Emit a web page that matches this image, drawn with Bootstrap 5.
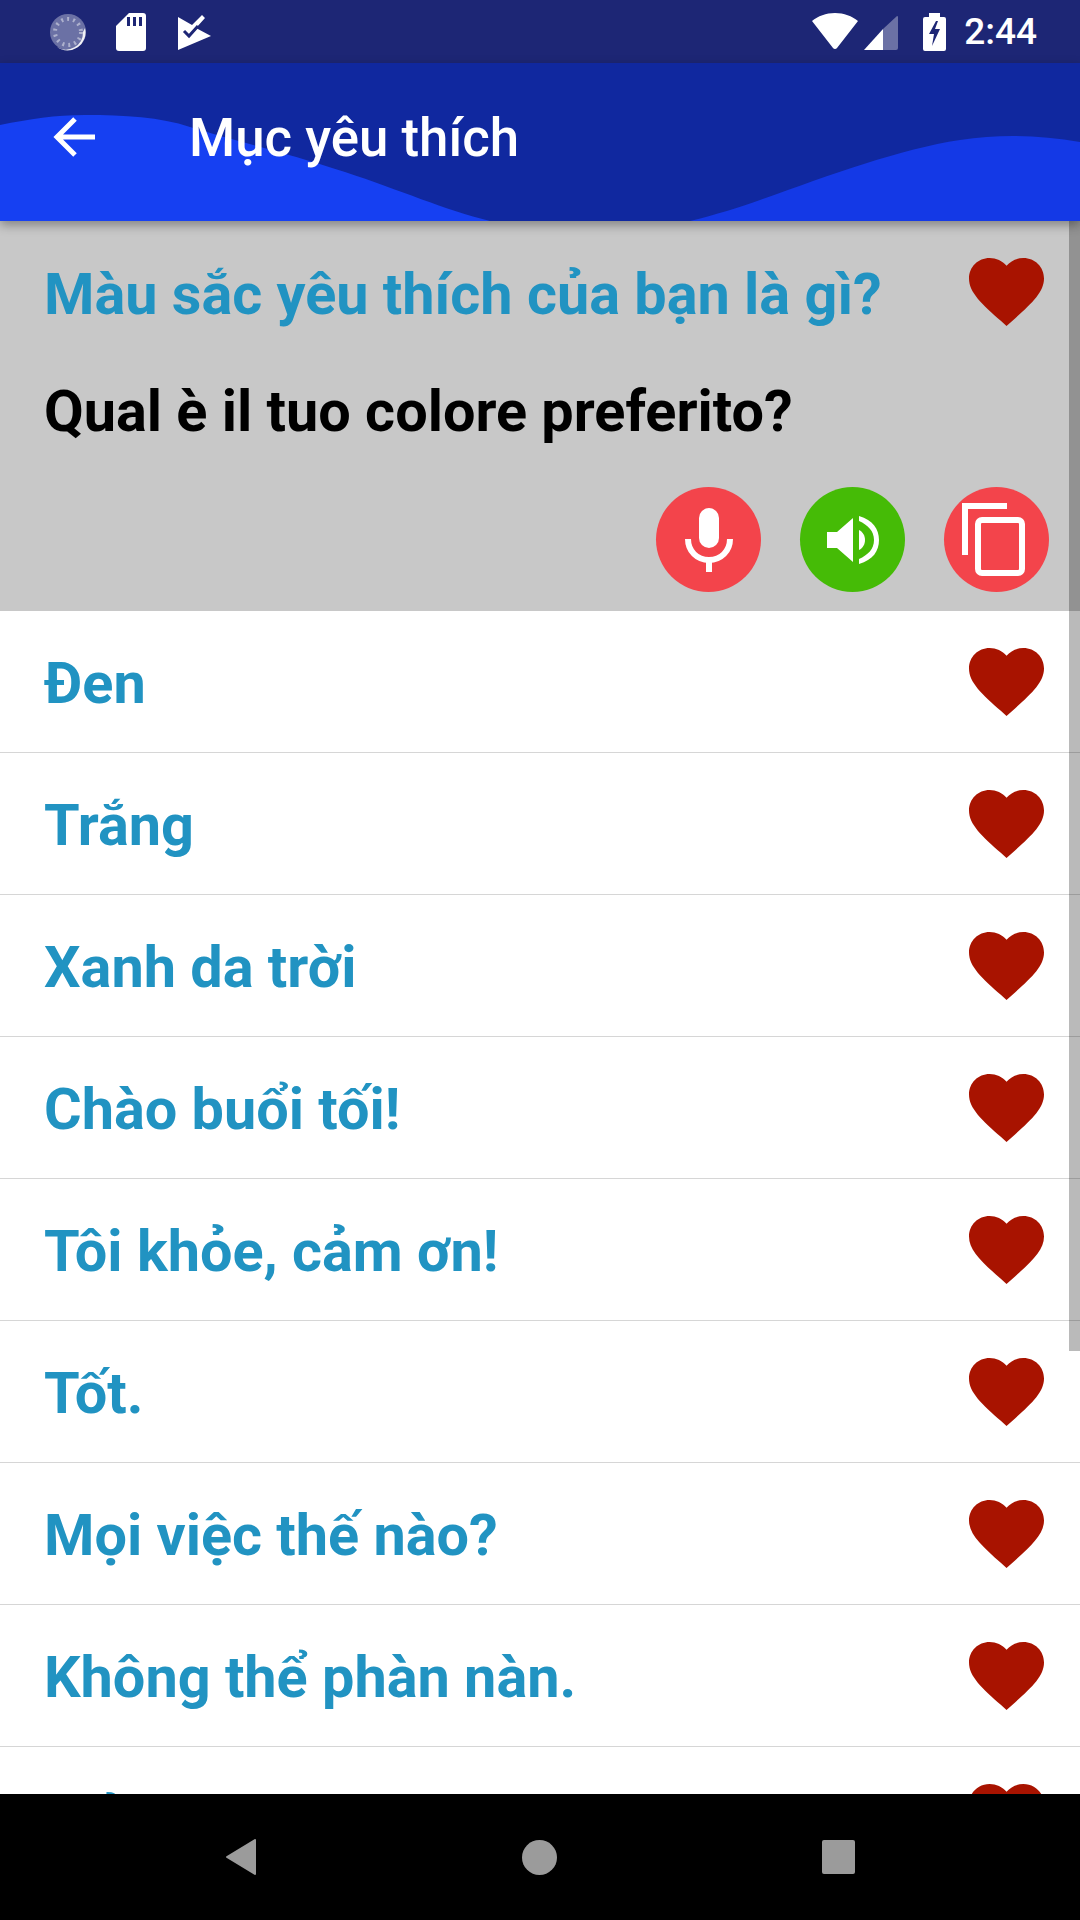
<!DOCTYPE html>
<html lang="vi"><head><meta charset="utf-8">
<link href="https://cdn.jsdelivr.net/npm/bootstrap@5.3.0/dist/css/bootstrap.min.css" rel="stylesheet">
<style>
html,body{margin:0;height:1920px;width:1080px;overflow:hidden}
body{font-family:Roboto,"Noto Sans",sans-serif;background:#fff}
.shell{height:1920px;width:1080px;position:relative}
.sbar{height:63px;background:#1d2675;padding-left:49px;padding-right:43px;color:#fff}
.clock{font-size:37px;font-weight:500;line-height:1;margin-left:18px}
.abar{height:158px;background:#10289f;position:relative;box-shadow:0 4px 10px rgba(0,0,0,.35);z-index:2;color:#fff}
.wave{position:absolute;inset:0;width:100%;height:100%}
.abar-in{position:relative;height:148px;padding-left:53px}
.atitle{font-size:52.800px;font-weight:500;margin-left:94px;line-height:1;padding-top:2px}
.fav{background:#c8c8c8;height:390px;padding:0 36px 0 44px}
.q,.a,.lrow span{font-size:57.600px;font-weight:700;line-height:1;margin-top:6px}
.lrow span{margin-top:5px}
.q,.lrow span{color:#2193c2}
.a{color:#000}
.h-ico{width:75px;height:68px;flex:none}
.qline{height:142px}
.aline{height:124px;padding-bottom:32px}
.rbtn{width:105px;height:105px;border-radius:50%;flex:none}
.rred{background:#f3444b}.rgreen{background:#45bb06}
.btns{gap:39px;margin-right:-5px}
.cp{margin-right:8px}
.lst{height:1183px;overflow:hidden}
.lrow{height:142px;padding:0 36px 0 44px;border-bottom:1px solid #d6d6d6}
.nbar{height:126px;background:#000}
.sb{position:absolute;right:0;top:221px;width:11px;height:1130px;background:rgba(0,0,0,.27);z-index:3}
</style></head><body>
<div class="shell d-flex flex-column">
<div class="sbar d-flex align-items-center justify-content-between">
 <div class="d-flex align-items-center" style="gap:28px">
  <svg width="38" height="38" viewBox="0 0 38 38"><circle cx="19" cy="19" r="18" fill="#fff" opacity=".35"/><path d="M36 15a18 18 0 0 1-28 19a17 17 0 0 0 26-15z" fill="#fff" opacity=".9"/><circle cx="19" cy="19" r="13" fill="none" stroke="#fff" stroke-opacity=".45" stroke-width="4" stroke-dasharray="2 4"/></svg>
  <svg width="32" height="38" viewBox="0 0 32 38"><path d="M14 0h14a3 3 0 0 1 3 3v32a3 3 0 0 1-3 3H4a3 3 0 0 1-3-3V13z" fill="#fff"/><path d="M12 4h3v9h-3zM18 4h3v9h-3zM24 4h3v9h-3z" fill="#1d2675"/></svg>
  <svg width="34" height="36" viewBox="0 0 34 36" style="margin-left:2px"><path d="M1 3l14 8L25 1l3 3-9 10 15 8L1 36z" fill="#fff"/><path d="M7 17l5 5 9-10" fill="none" stroke="#1d2675" stroke-width="3"/></svg>
 </div>
 <div class="d-flex align-items-center">
  <svg width="46" height="37" viewBox="0 0 46 37"><path d="M0 8C6 3 14 0 23 0s17 3 23 8L25 35a2.500 2.500 0 0 1-4 0z" fill="#fff"/></svg>
  <svg width="36" height="36" viewBox="0 0 36 36" style="margin-left:5px"><path d="M20 15v21H1z" fill="#fff"/><path d="M20 15L34 2a1 1 0 0 1 1 1v31a2 2 0 0 1-2 2H20z" fill="#fff" opacity=".35"/></svg>
  <svg width="23" height="38" viewBox="0 0 23 38" style="margin-left:24px"><path d="M6 0h11v4h4a2 2 0 0 1 2 2v30a2 2 0 0 1-2 2H2a2 2 0 0 1-2-2V6a2 2 0 0 1 2-2h4z" fill="#fff"/><path d="M13 8L6 21h5l-2 12 8-17h-5l3-8z" fill="#1d2675"/></svg>
  <span class="clock">2:44</span>
 </div>
</div>
<div class="abar">
 <svg class="wave" viewBox="0 0 1080 158" preserveAspectRatio="none"><path d="M0 62C30 56 55 52 85 52 125 52 160 54 190 64 235 78 280 88 345 109 400 127 445 147 490 158H0z" fill="#1640f2"/><path d="M690 158C715 152 740 144 760 137 830 112 900 86 960 77 1000 71 1040 72 1080 79V158z" fill="#1439e6"/></svg>
 <div class="abar-in d-flex align-items-center">
  <svg width="42" height="40" viewBox="0 0 42 40"><path d="M42 20H4M22 2L4 20l18 18" fill="none" stroke="#fff" stroke-width="5"/></svg>
  <div class="atitle">Mục yêu thích</div>
 </div>
</div>
<div class="sb"></div>
<div class="fav d-flex flex-column">
 <div class="qline d-flex align-items-center justify-content-between"><span class="q">Màu sắc yêu thích của bạn là gì?</span>
  <svg class="h-ico" viewBox="2 3 20 18.350" preserveAspectRatio="none"><use href="#ht"/></svg></div>
 <div class="aline d-flex align-items-center"><span class="a">Qual è il tuo colore preferito?</span></div>
 <div class="d-flex justify-content-end btns">
  <div class="rbtn rred d-flex align-items-center justify-content-center"><svg width="48" height="64" viewBox="0 0 48 64"><rect x="14" y="0" width="20" height="40" rx="10" fill="#fff"/><path d="M3 31c0 12 9 21 21 21s21-9 21-21M24 52v12" fill="none" stroke="#fff" stroke-width="6"/></svg></div>
  <div class="rbtn rgreen d-flex align-items-center justify-content-center"><svg width="52" height="50" viewBox="0 0 52 50"><path d="M0 17h10L26 3v44L10 33H0z" fill="#fff"/><path d="M32 15c4 2 6 6 6 10s-2 8-6 10z" fill="#fff"/><path d="M32 1C46 5 52 14 52 25S46 45 32 49L32 44C41 40 47 34 47 25S41 10 32 6z" fill="#fff"/></svg></div>
  <div class="rbtn rred d-flex align-items-center justify-content-center"><svg class="cp" width="64" height="73" viewBox="0 0 64 73"><path d="M46 3H4v49" fill="none" stroke="#fff" stroke-width="6"/><rect x="17" y="17" width="44" height="53" rx="4" fill="none" stroke="#fff" stroke-width="6"/></svg></div>
 </div>
</div>
<div class="lst">
 <div class="lrow d-flex align-items-center justify-content-between"><span>Đen</span><svg class="h-ico" viewBox="2 3 20 18.350" preserveAspectRatio="none"><use href="#ht"/></svg></div>
 <div class="lrow d-flex align-items-center justify-content-between"><span>Trắng</span><svg class="h-ico" viewBox="2 3 20 18.350" preserveAspectRatio="none"><use href="#ht"/></svg></div>
 <div class="lrow d-flex align-items-center justify-content-between"><span>Xanh da trời</span><svg class="h-ico" viewBox="2 3 20 18.350" preserveAspectRatio="none"><use href="#ht"/></svg></div>
 <div class="lrow d-flex align-items-center justify-content-between"><span>Chào buổi tối!</span><svg class="h-ico" viewBox="2 3 20 18.350" preserveAspectRatio="none"><use href="#ht"/></svg></div>
 <div class="lrow d-flex align-items-center justify-content-between"><span>Tôi khỏe, cảm ơn!</span><svg class="h-ico" viewBox="2 3 20 18.350" preserveAspectRatio="none"><use href="#ht"/></svg></div>
 <div class="lrow d-flex align-items-center justify-content-between"><span>Tốt.</span><svg class="h-ico" viewBox="2 3 20 18.350" preserveAspectRatio="none"><use href="#ht"/></svg></div>
 <div class="lrow d-flex align-items-center justify-content-between"><span>Mọi việc thế nào?</span><svg class="h-ico" viewBox="2 3 20 18.350" preserveAspectRatio="none"><use href="#ht"/></svg></div>
 <div class="lrow d-flex align-items-center justify-content-between"><span>Không thể phàn nàn.</span><svg class="h-ico" viewBox="2 3 20 18.350" preserveAspectRatio="none"><use href="#ht"/></svg></div>
 <div class="lrow d-flex align-items-center justify-content-between"><span>Mải làm việc.</span><svg class="h-ico" viewBox="2 3 20 18.350" preserveAspectRatio="none"><use href="#ht"/></svg></div>
</div>
<div class="nbar d-flex align-items-center">
 <svg width="30" height="36" viewBox="0 0 30 36" style="margin-left:226px"><path d="M29 1v34L1 18z" fill="#9b9b9b" stroke="#9b9b9b" stroke-width="2" stroke-linejoin="round"/></svg>
 <svg width="35" height="35" viewBox="0 0 35 35" style="margin-left:266px"><circle cx="17.500" cy="17.500" r="17.500" fill="#9b9b9b"/></svg>
 <svg width="33" height="34" viewBox="0 0 33 34" style="margin-left:265px"><rect width="33" height="34" rx="2" fill="#9b9b9b"/></svg>
</div>
<svg width="0" height="0" class="position-absolute"><defs><path id="ht" d="M12 21.350l-1.450-1.320C5.400 15.360 2 12.280 2 8.500 2 5.420 4.420 3 7.500 3c1.740 0 3.410.81 4.500 2.090C13.090 3.810 14.760 3 16.500 3 19.580 3 22 5.420 22 8.500c0 3.780-3.400 6.860-8.550 11.540L12 21.350z" fill="#a81300"/></defs></svg>
</div>
</body></html>
